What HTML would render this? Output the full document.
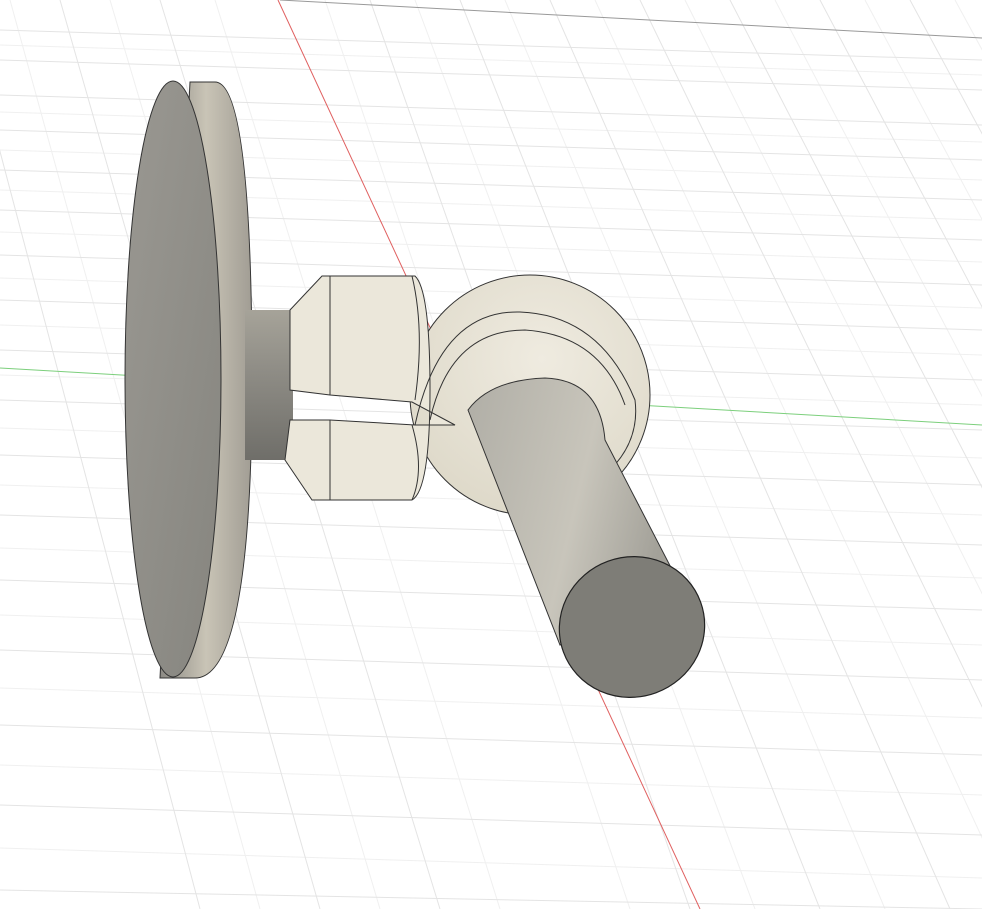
<!DOCTYPE html>
<html><head><style>html,body{margin:0;padding:0;background:#fff;width:982px;height:909px;overflow:hidden}</style></head>
<body>
<svg width="982" height="909" viewBox="0 0 982 909" xmlns="http://www.w3.org/2000/svg">
<defs>
<linearGradient id="rim" x1="0" x2="1" y1="0" y2="0"><stop offset="0" stop-color="#8c8a84"/><stop offset="0.5" stop-color="#c9c4b6"/><stop offset="1" stop-color="#a19d94"/></linearGradient>
<linearGradient id="face" x1="0" x2="1" y1="0" y2="1"><stop offset="0" stop-color="#9a9892"/><stop offset="1" stop-color="#86857f"/></linearGradient>
<linearGradient id="shaft" x1="0" x2="0" y1="0" y2="1"><stop offset="0" stop-color="#a6a399"/><stop offset="0.4" stop-color="#8f8d86"/><stop offset="1" stop-color="#6f6e69"/></linearGradient>
<linearGradient id="arm" x1="0" x2="1" y1="0" y2="0.3"><stop offset="0" stop-color="#b0aea6"/><stop offset="0.6" stop-color="#c8c5bb"/><stop offset="1" stop-color="#a3a199"/></linearGradient>
<radialGradient id="sph" cx="0.55" cy="0.35" r="0.7"><stop offset="0" stop-color="#efebe0"/><stop offset="1" stop-color="#ddd8c8"/></radialGradient>
</defs>
<g stroke="#f0f0f0" stroke-width="1">
<path d="M0 45 L982 75 M0 112 L982 142 M0 150 L982 180 M0 190 L982 220 M0 232 L982 262 M0 278 L982 308 M0 325 L982 355 M0 375 L982 405 M0 428 L982 458 M0 485 L982 515 M0 548 L982 578 M0 615 L982 645 M0 688 L982 718 M0 765 L982 795 M0 848 L982 878"/>
<path d="M10 0 L260 909 M110 0 L380 909 M215 0 L500 909 M325 0 L630 909 M415 0 L755 909 M505 0 L885 909 M595 0 L1015 909 M685 0 L1140 909 M775 0 L1250 909 M865 0 L1350 909 M955 0 L1450 909"/>
</g>
<g stroke="#e4e4e4" stroke-width="1">
<path d="M0 30 L982 60 M0 60 L982 90 M0 95 L982 125 M0 130 L982 160 M0 170 L982 200 M0 210 L982 240 M0 255 L982 285 M0 300 L982 330 M0 350 L982 380 M0 400 L982 430 M0 455 L982 485 M0 515 L982 545 M0 580 L982 610 M0 650 L982 680 M0 725 L982 755 M0 805 L982 835 M0 890 L982 909"/>
<path d="M-40 0 L200 909 M60 0 L320 909 M160 0 L440 909 M370 0 L690 909 M460 0 L820 909 M550 0 L950 909 M640 0 L1080 909 M730 0 L1200 909 M820 0 L1300 909 M910 0 L1400 909"/>
</g>
<line x1="278" y1="0" x2="700" y2="909" stroke="#e06060" stroke-width="1"/>
<line x1="0" y1="368" x2="982" y2="425" stroke="#7ccf7c" stroke-width="1"/>
<line x1="280" y1="0" x2="982" y2="38" stroke="#999" stroke-width="1"/>
<path d="M190 82 L215 82 Q252 82 252 380 Q252 678 195 678 L160 678 Z" fill="url(#rim)" stroke="#333" stroke-width="1"/>
<ellipse cx="173" cy="379" rx="48" ry="298" fill="url(#face)" stroke="#333" stroke-width="1"/>
<rect x="245" y="310" width="48" height="150" fill="url(#shaft)"/>
<circle cx="530" cy="395" r="120" fill="url(#sph)" stroke="#333" stroke-width="1"/>
<path d="M290 310 L322 276 L415 276 Q430 290 430 390 Q430 490 412 500 L312 500 L285 460 L290 420 L330 420 L415 425 L455 425 L412 402 L330 395 L290 390 Z" fill="#ebe7da" stroke="#333" stroke-width="1"/>
<path d="M330 276 L330 395 M330 420 L330 500 M412 276 Q425 330 415 400 M412 425 Q425 470 412 500" stroke="#333" fill="none"/>
<path d="M415 425 Q440 310 520 312 Q600 315 635 400 Q640 440 610 470" fill="none" stroke="#333"/>
<path d="M430 420 Q450 330 525 330 Q600 335 625 405" fill="none" stroke="#333"/>
<path d="M468 410 Q490 380 545 378 Q600 380 605 440 L680 585 L560 645 Z" fill="url(#arm)" stroke="#333" stroke-width="1"/>
<ellipse cx="632" cy="627" rx="73" ry="70" transform="rotate(-20 632 627)" fill="#7e7d77" stroke="#222" stroke-width="1.2"/>
</svg>
</body></html>
